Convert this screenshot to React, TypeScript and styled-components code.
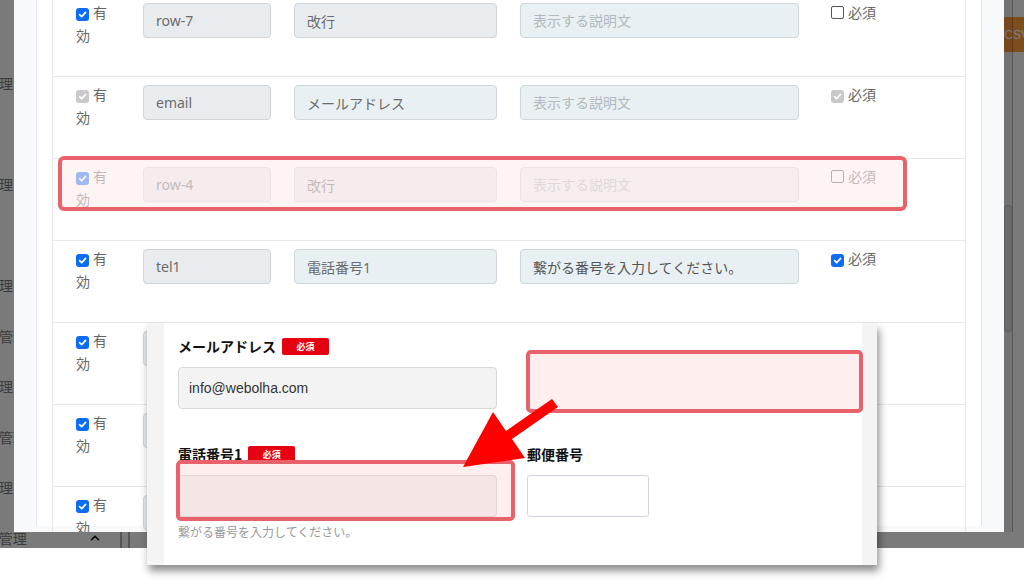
import { FC } from 'react';
import styled, { createGlobalStyle } from 'styled-components';
import { ChevronUp } from 'lucide-react';

type CheckState = 'on' | 'off' | 'disabled';

interface FieldRow {
    enabled: CheckState;
    name: string;
    label: string;
    labelLocked: boolean;
    desc: string;
    descIsValue?: boolean;
    required: CheckState;
}

const rows: FieldRow[] = [
    { enabled: 'on', name: 'row-7', label: '改行', labelLocked: true, desc: '', required: 'off' },
    { enabled: 'disabled', name: 'email', label: 'メールアドレス', labelLocked: false, desc: '', required: 'disabled' },
    { enabled: 'on', name: 'row-4', label: '改行', labelLocked: true, desc: '', required: 'off' },
    { enabled: 'on', name: 'tel1', label: '電話番号1', labelLocked: false, desc: '繋がる番号を入力してください。', descIsValue: true, required: 'on' },
    { enabled: 'on', name: 'zip', label: '郵便番号', labelLocked: false, desc: '', required: 'off' },
    { enabled: 'on', name: 'address', label: '住所', labelLocked: false, desc: '', required: 'off' },
    { enabled: 'on', name: 'tel2', label: '電話番号2', labelLocked: false, desc: '', required: 'off' },
];

const menu = [
    '会員管理',
    '設定',
    '商品管理',
    '売上',
    '顧客管理',
    'メール管理',
    '受注管理',
    'ページ管理',
    '記事管理',
    'ユーザ管理',
];

const GlobalStyle = createGlobalStyle`
    html, body {
        margin: 0;
        padding: 0;
        background: #fff;
    }
    body {
        font-family: "Noto Sans", "Noto Sans CJK JP", sans-serif;
    }
    * {
        box-sizing: border-box;
    }
`;

const Stage = styled.div`
    position: relative;
    width: 1024px;
    height: 586px;
    overflow: hidden;
    background: #fff;
`;

const Screen = styled.div`
    position: relative;
    height: 548px;
    overflow: hidden;
`;

/* admin page behind the modal, cropped on the left */
const Page = styled.div`
    display: flex;
    width: 1101px;
    height: 100%;
    margin-left: -59px;
    background: #f4f4f4;
`;

const Sidebar = styled.nav`
    width: 181px;
    flex-shrink: 0;
    padding: 58px 18px 0 16px;
    border-right: 2px solid #a8a8a8;
    color: #777;
    font-size: 14px;
`;

const MenuItem = styled.div`
    display: flex;
    align-items: center;
    height: 50.5px;
    white-space: nowrap;
    font-family: "Noto Sans CJK JP", sans-serif;

    svg {
        margin-left: auto;
        color: #1a1a1a;
    }
`;

const Main = styled.main`
    flex: 1;
    padding-left: 6px;
`;

const MainPanel = styled.div`
    height: 100%;
    border-left: 2px solid #a8a8a8;
`;

const Toolbar = styled.div`
    display: flex;
    justify-content: flex-end;
    padding: 17px 1px 0 0;
`;

const CsvButton = styled.div`
    height: 35px;
    padding: 0 12px;
    display: flex;
    align-items: center;
    background: #fd9a3c;
    color: #fff;
    font-size: 12px;
    font-family: "Liberation Sans", sans-serif;
`;

const Backdrop = styled.div`
    position: absolute;
    inset: 0;
    background: rgba(0, 0, 0, 0.5);
`;

const ScrollRail = styled.div`
    position: absolute;
    top: 0;
    left: 1004px;
    width: 9px;
    height: 532px;
    background: rgba(0, 0, 0, 0.06);
    border-right: 1px solid rgba(0, 0, 0, 0.22);
`;

const ScrollThumb = styled.div`
    margin-top: 205px;
    height: 127px;
    border-radius: 4px;
    border: 1px solid rgba(0, 0, 0, 0.12);
    background: rgba(0, 0, 0, 0.06);
`;

const Modal = styled.div`
    position: absolute;
    top: 0;
    left: 14px;
    width: 990px;
    height: 532px;
    padding: 0 22px;
    background: #f8f9fa;
    overflow: hidden;
`;

const ModalCard = styled.div`
    height: 100%;
    padding: 0 15px;
    background: #fff;
    border-left: 1px solid #e1e4e8;
    border-right: 1px solid #e1e4e8;
`;

const Table = styled.div`
    margin-top: -6px;
    border-left: 1px solid #e6e6e6;
    border-right: 1px solid #e6e6e6;
`;

const Row = styled.div`
    display: grid;
    grid-template-columns: 44px 128px 203px 279px 1fr;
    column-gap: 23px;
    align-items: start;
    height: 82px;
    padding: 8px 0 0 23px;
    border-top: 1px solid #e8e8e8;
`;

const CheckCell = styled.div<{ $pad?: number }>`
    margin-top: -2px;
    padding-left: ${(p) => p.$pad ?? 0}px;
    font-size: 14px;
    line-height: 23px;
    color: #666;
    font-family: "Noto Sans CJK JP", sans-serif;
`;

const Box = styled.span<{ $state: CheckState }>`
    display: inline-flex;
    align-items: center;
    justify-content: center;
    width: 13px;
    height: 13px;
    margin-right: 4px;
    vertical-align: -1px;
    border-radius: ${(p) => (p.$state === 'off' ? 2 : 3)}px;
    border: 1px solid ${(p) => (p.$state === 'off' ? '#555' : 'transparent')};
    background: ${(p) =>
        p.$state === 'on' ? '#0b6cf4' : p.$state === 'disabled' ? '#c9c9c9' : '#fff'};
`;

const Input = styled.input<{ $locked?: boolean; $value?: boolean }>`
    width: 100%;
    height: 35px;
    padding: 0 12px;
    border: 1px solid #cfd5da;
    border-radius: 4px;
    background: ${(p) => (p.$locked ? '#e9ecef' : '#e8f0f3')};
    color: ${(p) => (p.$value ? '#555' : '#6b6b6b')};
    font-family: "Noto Sans", "Noto Sans CJK JP", sans-serif;
    font-size: 14px;
    outline: none;

    &::placeholder {
        color: #b3b8bc;
    }
`;

/* the preview of the public form, pasted over the screenshot */
const Preview = styled.div`
    position: absolute;
    left: 147px;
    top: 323px;
    width: 730px;
    height: 242px;
    display: flex;
    background: #f4f4f4;
    box-shadow: 2px 6px 8px rgba(0, 0, 0, 0.45);
`;

const PreviewBody = styled.div`
    flex: 1;
    margin: 0 15px 0 17px;
    padding: 13px 0 0 14px;
    background: #fff;
    display: grid;
    grid-template-columns: 319px 335px;
    grid-auto-rows: min-content;
    column-gap: 30px;
    row-gap: 35px;
`;

const Field = styled.div`
    display: flex;
    flex-direction: column;
`;

const LabelRow = styled.div`
    display: flex;
    align-items: center;
    gap: 6px;
    height: 19px;
    margin-bottom: 12px;
`;

const Label = styled.span`
    font-family: "Noto Sans CJK JP", sans-serif;
    font-size: 14px;
    font-weight: 700;
    color: #111;
`;

const Badge = styled.span`
    display: flex;
    align-items: center;
    justify-content: center;
    width: 47px;
    height: 17px;
    margin-top: 2px;
    border-radius: 2px;
    background: #e60012;
    color: #fff;
    font-family: "Noto Sans CJK JP", sans-serif;
    font-size: 9px;
    font-weight: 700;
`;

const FormInput = styled.div<{ $width?: number; $plain?: boolean }>`
    width: ${(p) => (p.$width ? `${p.$width}px` : '100%')};
    height: 42px;
    padding: 0 10px;
    display: flex;
    align-items: center;
    border: 1px solid ${(p) => (p.$plain ? '#cfd6de' : '#d8d8d8')};
    border-radius: ${(p) => (p.$plain ? 3 : 4)}px;
    background: ${(p) => (p.$plain ? '#fff' : '#f3f3f3')};
    color: #333;
    font-family: "Liberation Sans", Arial, sans-serif;
    font-size: 14px;
`;

const Help = styled.div`
    margin-top: 8px;
    font-family: "Noto Sans CJK JP", sans-serif;
    font-size: 12px;
    line-height: 14px;
    color: #999;
`;

/* red annotation frames */
const Frame = styled.div<{ $tint: string }>`
    position: absolute;
    border: 4px solid #e9626b;
    border-radius: 5px;
    background: ${(p) => p.$tint};
    pointer-events: none;
`;

const ArrowLayer = styled.svg`
    position: absolute;
    inset: 0;
    pointer-events: none;
`;

const Check: FC<{ state: CheckState }> = ({ state }) => (
    <Box $state={state}>
        {state !== 'off' && (
            <svg width="9" height="9" viewBox="0 0 10 10">
                <path
                    d="M1.8 5.2 L4.1 7.5 L8.4 2.6"
                    stroke="#fff"
                    strokeWidth="1.9"
                    fill="none"
                    strokeLinecap="round"
                    strokeLinejoin="round"
                />
            </svg>
        )}
    </Box>
);

const App: FC = () => {
    return (
        <Stage>
            <GlobalStyle />
            <Screen>
                <Page>
                    <Sidebar>
                        {menu.map((item, i) => (
                            <MenuItem key={item}>
                                {item}
                                {i === menu.length - 1 && <ChevronUp size={14} strokeWidth={3} />}
                            </MenuItem>
                        ))}
                    </Sidebar>
                    <Main>
                        <MainPanel>
                            <Toolbar>
                                <CsvButton>CSV</CsvButton>
                            </Toolbar>
                        </MainPanel>
                    </Main>
                </Page>
                <Backdrop />
                <ScrollRail>
                    <ScrollThumb />
                </ScrollRail>
                <Modal>
                    <ModalCard>
                        <Table>
                            {rows.map((row) => (
                                <Row key={row.name}>
                                    <CheckCell>
                                        <Check state={row.enabled} />
                                        有効
                                    </CheckCell>
                                    <Input readOnly $locked value={row.name} />
                                    <Input readOnly $locked={row.labelLocked} value={row.label} />
                                    <Input
                                        readOnly
                                        $value={row.descIsValue}
                                        value={row.descIsValue ? row.desc : ''}
                                        placeholder="表示する説明文"
                                    />
                                    <CheckCell $pad={9}>
                                        <Check state={row.required} />
                                        必須
                                    </CheckCell>
                                </Row>
                            ))}
                        </Table>
                    </ModalCard>
                </Modal>
                <Frame
                    $tint="rgba(255, 236, 236, 0.6)"
                    style={{ left: 58, top: 156, width: 849, height: 55, borderRadius: 6 }}
                />
            </Screen>

            <Preview>
                <PreviewBody>
                    <Field>
                        <LabelRow>
                            <Label>メールアドレス</Label>
                            <Badge>必須</Badge>
                        </LabelRow>
                        <FormInput>info@webolha.com</FormInput>
                    </Field>
                    <Field />
                    <Field>
                        <LabelRow>
                            <Label>電話番号1</Label>
                            <Badge>必須</Badge>
                        </LabelRow>
                        <FormInput />
                        <Help>繋がる番号を入力してください。</Help>
                    </Field>
                    <Field>
                        <LabelRow>
                            <Label>郵便番号</Label>
                        </LabelRow>
                        <FormInput $plain $width={122} />
                    </Field>
                </PreviewBody>
            </Preview>

            <Frame
                $tint="rgba(255, 200, 200, 0.3)"
                style={{ left: 526, top: 350, width: 337, height: 63 }}
            />
            <Frame
                $tint="rgba(255, 200, 200, 0.3)"
                style={{ left: 176, top: 460, width: 339, height: 61 }}
            />

            <ArrowLayer width="1024" height="586" viewBox="0 0 1024 586">
                <polygon
                    points="463,467 493,412 506,431 552,399 558,407 512,439 525,458"
                    fill="#ff0000"
                />
            </ArrowLayer>
        </Stage>
    );
};

export default App;
